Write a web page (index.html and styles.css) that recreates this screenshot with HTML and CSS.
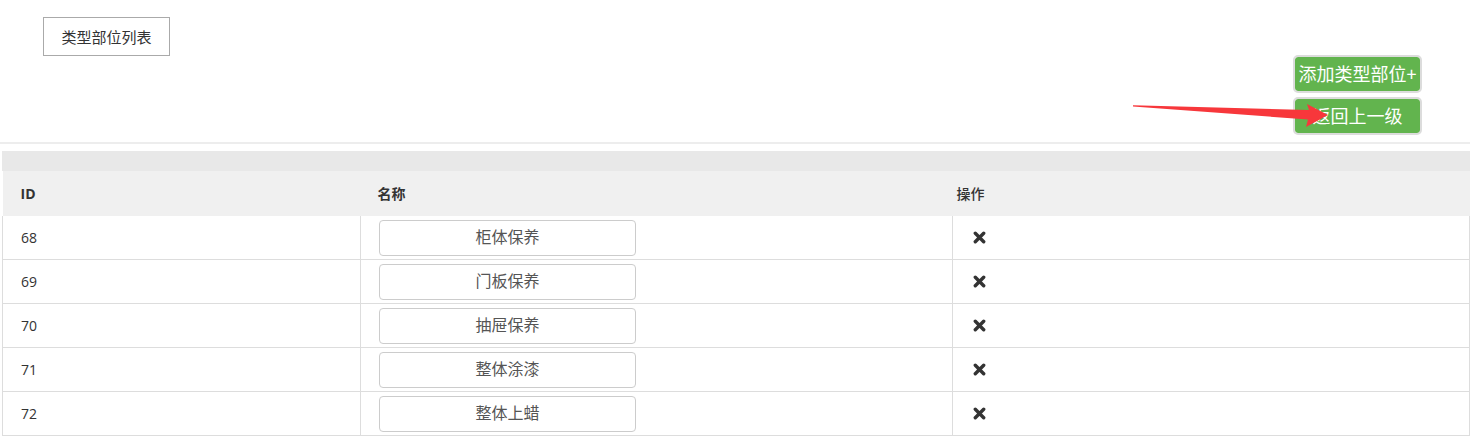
FILE: index.html
```html
<!DOCTYPE html>
<html lang="zh-CN">
<head>
<meta charset="utf-8">
<title>类型部位列表</title>
<link rel="stylesheet" href="styles.css">
</head>
<body>
<div class="page">
  <div class="top">
    <button class="tab-btn" type="button">类型部位列表</button>
  </div>
  <div class="toolbar">
    <button class="green-btn" type="button">添加类型部位+</button>
    <button class="green-btn" type="button">返回上一级</button>
  </div>
  <div class="divider"></div>
  <div class="panel">
    <div class="panel-band"></div>
    <table class="grid">
      <thead>
        <tr>
          <th class="c-id">ID</th>
          <th class="c-name">名称</th>
          <th class="c-op">操作</th>
        </tr>
      </thead>
      <tbody>
        <tr><td class="c-id">68</td><td class="c-name"><input class="name-input" value="柜体保养"></td><td class="c-op"><svg class="del" viewBox="0 0 13 13"><path d="M2.3 2.3L10.7 10.7M10.7 2.3L2.3 10.7"/></svg></td></tr>
        <tr><td class="c-id">69</td><td class="c-name"><input class="name-input" value="门板保养"></td><td class="c-op"><svg class="del" viewBox="0 0 13 13"><path d="M2.3 2.3L10.7 10.7M10.7 2.3L2.3 10.7"/></svg></td></tr>
        <tr><td class="c-id">70</td><td class="c-name"><input class="name-input" value="抽屉保养"></td><td class="c-op"><svg class="del" viewBox="0 0 13 13"><path d="M2.3 2.3L10.7 10.7M10.7 2.3L2.3 10.7"/></svg></td></tr>
        <tr><td class="c-id">71</td><td class="c-name"><input class="name-input" value="整体涂漆"></td><td class="c-op"><svg class="del" viewBox="0 0 13 13"><path d="M2.3 2.3L10.7 10.7M10.7 2.3L2.3 10.7"/></svg></td></tr>
        <tr><td class="c-id">72</td><td class="c-name"><input class="name-input" value="整体上蜡"></td><td class="c-op"><svg class="del" viewBox="0 0 13 13"><path d="M2.3 2.3L10.7 10.7M10.7 2.3L2.3 10.7"/></svg></td></tr>
      </tbody>
    </table>
  </div>
  <svg class="arrow" width="1470" height="436" viewBox="0 0 1470 436">
    <polygon points="1133,105.3 1309,110 1307,104 1328,115 1306,127 1308,119.5 1133,106.6" fill="#f7373b"/>
  </svg>
</div>
</body>
</html>
```

FILE: styles.css
```css
html, body {
  margin: 0;
  padding: 0;
  background: #fff;
}
body {
  font-family: "Noto Sans CJK SC", "Open Sans", sans-serif;
  color: #333;
  overflow: hidden;
}
.page {
  position: relative;
  width: 1470px;
  height: 436px;
}
.top {
  padding: 17px 0 0 43px;
  height: 38px;
}
.tab-btn {
  box-sizing: border-box;
  height: 39px;
  width: 127px;
  padding: 0;
  margin: 0;
  border: 1px solid #aaa;
  background: #fff;
  color: #333;
  font-family: "Noto Sans CJK SC", sans-serif;
  font-size: 15px;
  line-height: 35px;
  cursor: pointer;
}
.toolbar {
  display: flex;
  flex-direction: column;
  align-items: flex-end;
  gap: 4px;
  padding-right: 48px;
  height: 87px;
}
.green-btn {
  box-sizing: border-box;
  width: 129px;
  height: 38px;
  margin: 0;
  padding: 0 0 2px 0;
  border: 2px solid #dcdcdc;
  border-radius: 5px;
  background: #62b44e;
  background-clip: padding-box;
  color: #fff;
  font-family: "Noto Sans CJK SC", sans-serif;
  font-size: 18px;
  line-height: 32px;
  cursor: pointer;
}
.divider {
  border-top: 2px solid #ededed;
}
.panel {
  margin: 7px 0 0 2px;
}
.panel-band {
  height: 20px;
  background: #e8e8e8;
}
.grid {
  width: 1468px;
  border-collapse: collapse;
  table-layout: fixed;
  font-family: "Open Sans", "Noto Sans CJK SC", sans-serif;
}
.grid th {
  background: #f0f0f0;
  height: 44px;
  padding: 0 0 1px 0;
  text-align: left;
  font-size: 14px;
  font-weight: 700;
  color: #333;
  vertical-align: middle;
}
.grid th.c-id { padding-left: 18px; }
.grid th.c-name { padding-left: 17px; font-family: "Noto Sans CJK SC", sans-serif; font-size: 14px; }
.grid th.c-op { padding-left: 4px; font-family: "Noto Sans CJK SC", sans-serif; font-size: 14px; font-weight: 500; }
.grid td {
  height: 43px;
  padding: 0;
  border: 1px solid #dddddd;
  border-top: none;
  font-size: 14px;
  color: #333;
  vertical-align: middle;
}
.grid td.c-id { padding-left: 18px; }
.grid td.c-name { padding-left: 18px; }
.grid td.c-op { padding-left: 20px; }
.c-id { width: 340px; }
.c-name { width: 575px; }
.name-input {
  box-sizing: border-box;
  display: block;
  width: 257px;
  height: 36px;
  margin: 0;
  padding: 0 0 3px 0;
  border: 1px solid #cccccc;
  border-radius: 4px;
  background: #fff;
  color: #555;
  font-family: "Noto Sans CJK SC", sans-serif;
  font-size: 16px;
  text-align: center;
}
.del {
  display: block;
  width: 13px;
  height: 13px;
}
.del path {
  stroke: #333;
  stroke-width: 3.4;
  stroke-linecap: round;
  fill: none;
}
.arrow {
  position: absolute;
  left: 0;
  top: 0;
  pointer-events: none;
}
```
